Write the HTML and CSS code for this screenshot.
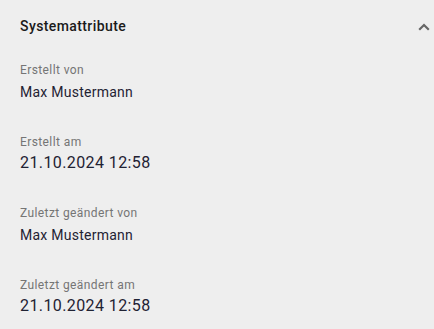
FILE: index.html
```html
<!DOCTYPE html>
<html lang="de">
<head>
    <meta charset="UTF-8">
    <title>Systemattribute</title>
    <link rel="stylesheet" href="styles.css">
</head>
<body>

    <section class="panel">
        <header class="panel-head">
            <h2>Systemattribute</h2>
            <svg class="chevron" width="12" height="8" viewBox="0 0 12 8">
                <path d="M1.2 6.8 L6 2 L10.8 6.8" fill="none" stroke="#666" stroke-width="2.2"/>
            </svg>
        </header>

        <div class="fields">
            <div class="field">
                <div class="label">Erstellt von</div>
                <div class="value">Max Mustermann</div>
            </div>
            <div class="field">
                <div class="label">Erstellt am</div>
                <div class="value date">21.10.2024 12:58</div>
            </div>
            <div class="field">
                <div class="label">Zuletzt geändert von</div>
                <div class="value">Max Mustermann</div>
            </div>
            <div class="field">
                <div class="label">Zuletzt geändert am</div>
                <div class="value date">21.10.2024 12:58</div>
            </div>
        </div>
    </section>

</body>
</html>
```

FILE: styles.css
```css
html, body{
    margin: 0;
    background: #eeeeee;
}
body{
    font-family: Roboto, "Liberation Sans", sans-serif;
    color: #212121;
}

.panel-head{
    display: flex;
    align-items: center;
    justify-content: space-between;
    padding: 16px 4px 0 20px;
}
.panel-head h2{
    margin: 0;
    font-size: 14px;
    line-height: 20px;
    font-weight: 500;
    letter-spacing: 0.4px;
    color: #1a1a1a;
}
.chevron{
    display: block;
    margin-top: 1px;
}

.fields{
    padding: 26px 20px 0;
}
.field + .field{
    margin-top: 32px;
}
.label{
    font-size: 12px;
    line-height: 16px;
    margin-bottom: 3px;
    letter-spacing: 0.4px;
    color: #757575;
}
.value{
    padding-top: 2px;
    font-size: 14px;
    line-height: 19px;
    letter-spacing: 0.25px;
    color: #1f2233;
}
.value.date{
    padding-top: 0;
    font-size: 16px;
    line-height: 20px;
    letter-spacing: 0.4px;
}
```
